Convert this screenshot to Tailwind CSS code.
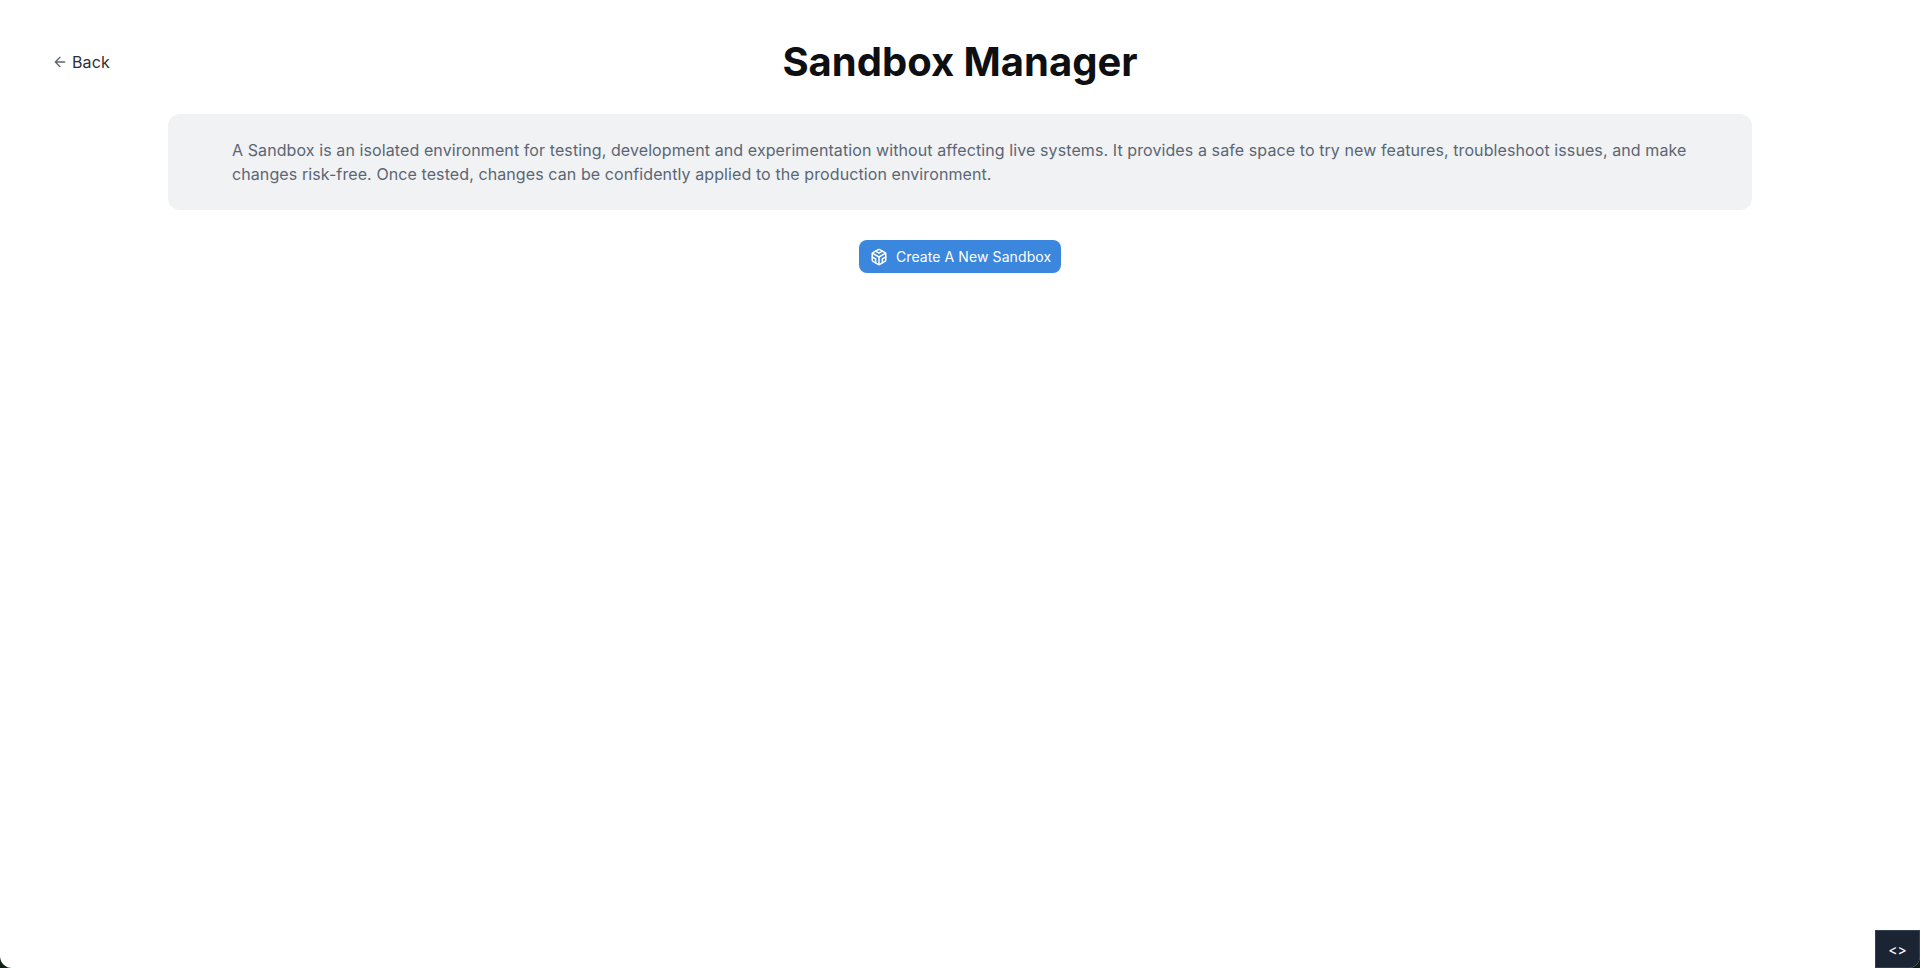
<!DOCTYPE html>
<html><head><meta charset="utf-8"><script src="https://cdn.jsdelivr.net/npm/@tailwindcss/browser@4"></script></head>
<body class="bg-[#0f1f14]">
<div class="relative h-[968px] w-[1920px] overflow-hidden rounded-b-[12px] bg-white font-['Inter',sans-serif]">
<div class="flex h-[88px] items-center px-[52px] pt-[36px]">
<a class="flex w-[60px] items-center gap-[4px] whitespace-nowrap text-[16px] tracking-[0.095px] text-[#2b2f36]">
<svg class="h-[16px] w-[16px] shrink-0 text-[#5f6670]" viewBox="0 0 24 24" fill="none" stroke="currentColor" stroke-width="2" stroke-linecap="round" stroke-linejoin="round"><path d="M19 12H5M12 19l-7-7 7-7"/></svg>Back</a>
<h1 class="flex-1 pr-[60px] text-center text-[40px] leading-[48px] font-bold text-[#0d0f12]">Sandbox Manager</h1>
</div>
<div class="mx-auto mt-[26px] h-[96px] w-[1584px] rounded-[12px] bg-[#f1f2f4] py-[24px] pl-[64px] pr-[56px] text-[16px] leading-[24px] tracking-[0.095px] text-[#5a6675]">A Sandbox is an isolated environment for testing, development and experimentation without affecting live systems. It provides a safe space to try new features, troubleshoot issues, and make changes risk-free. Once tested, changes can be confidently applied to the production environment.</div>
<div class="mt-[30px] flex justify-center">
<button class="flex h-[33px] w-[202px] items-center gap-[8px] rounded-[8px] bg-[#3b87dd] pl-[11px] text-[14px] tracking-[0.09px] whitespace-nowrap text-white">
<svg class="h-[18px] w-[18px] shrink-0" viewBox="0 0 24 24" fill="none" stroke="currentColor" stroke-width="2" stroke-linecap="round" stroke-linejoin="round"><path d="M21 16V8a2 2 0 0 0-1-1.73l-7-4a2 2 0 0 0-2 0l-7 4A2 2 0 0 0 3 8v8a2 2 0 0 0 1 1.73l7 4a2 2 0 0 0 2 0l7-4A2 2 0 0 0 21 16z"/><polyline points="7.5 4.21 12 6.81 16.5 4.21"/><polyline points="7.5 19.79 7.5 14.6 3 12"/><polyline points="21 12 16.5 14.6 16.5 19.79"/><polyline points="3.27 6.96 12 12.01 20.73 6.96"/><line x1="12" y1="22.08" x2="12" y2="12"/></svg>
Create A New Sandbox</button>
</div>
<div class="absolute bottom-0 right-0 flex h-[38px] w-[45px] items-center justify-center border border-[#33404f] bg-[#1a2433] text-[14px] tracking-[0.1px] text-white">&lt;&gt;</div>
</div>
</body></html>
